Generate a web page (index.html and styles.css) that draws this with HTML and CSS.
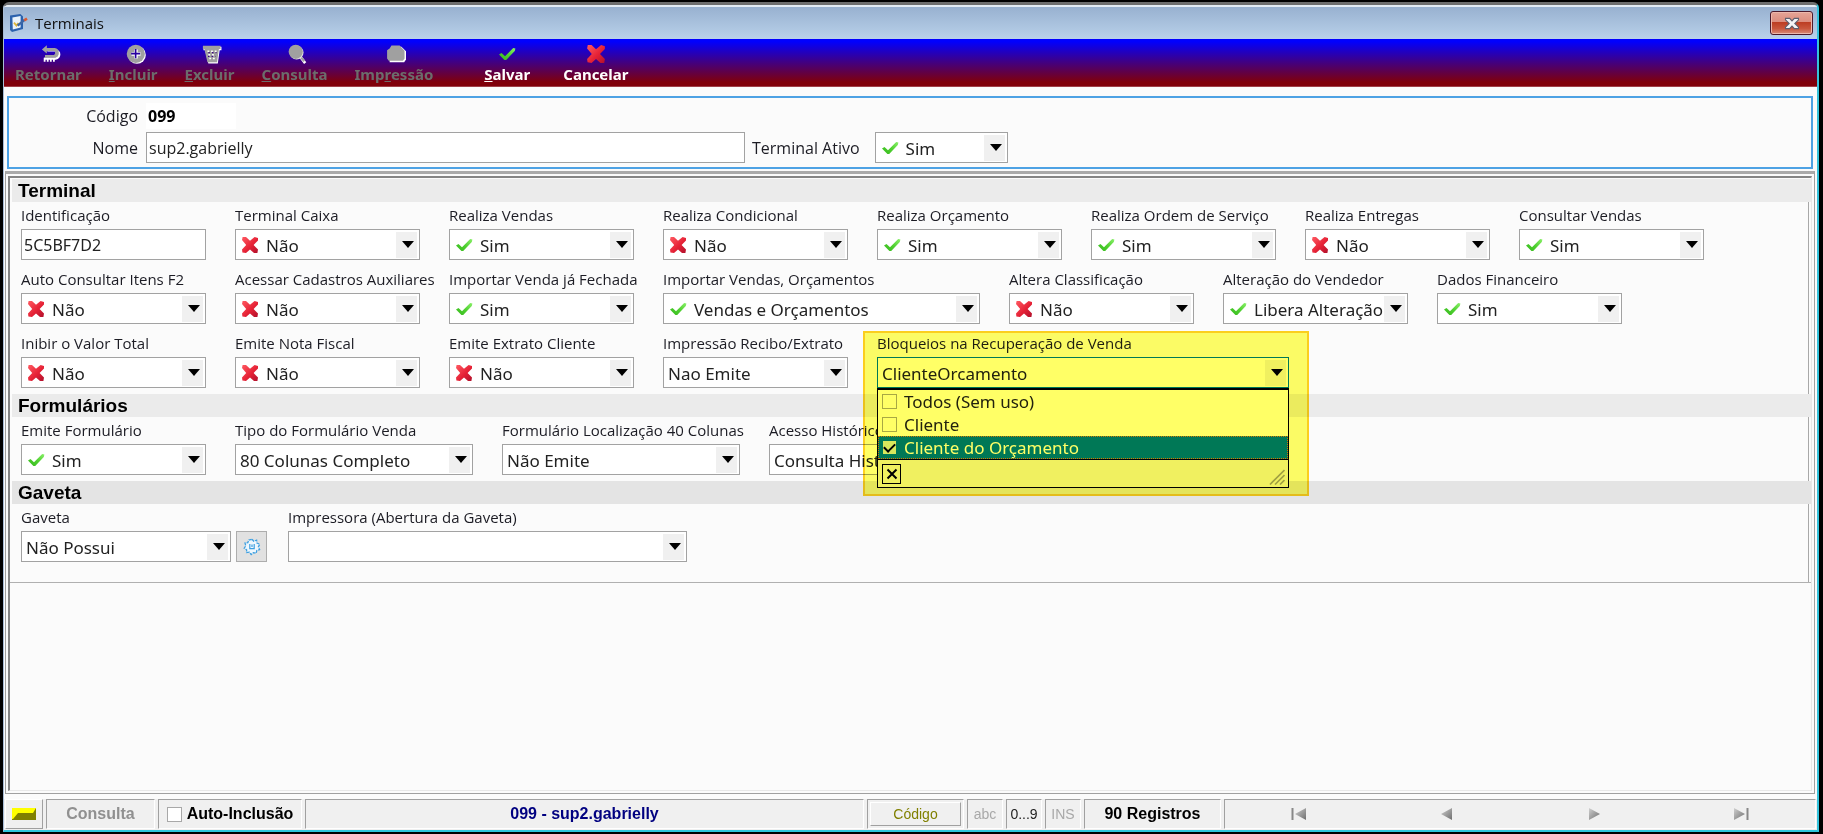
FILE: index.html
```html
<!DOCTYPE html>
<html lang="pt-BR">
<head>
<meta charset="utf-8">
<title>Terminais</title>
<link rel="stylesheet" href="styles.css">
</head>
<body>
<svg class="defs" aria-hidden="true">
  <defs>
    <linearGradient id="green" x1="1" y1="0" x2="0" y2="1"><stop offset="0" stop-color="#8af06a"/><stop offset="0.5" stop-color="#4fd030"/><stop offset="1" stop-color="#35b81c"/></linearGradient>
    <linearGradient id="red" x1="0" y1="0" x2="1" y2="1"><stop offset="0" stop-color="#ff5a62"/><stop offset="0.55" stop-color="#e62236"/><stop offset="1" stop-color="#b0102c"/></linearGradient>
    <linearGradient id="grey" x1="0" y1="0" x2="1" y2="1"><stop offset="0" stop-color="#d0d0d0"/><stop offset="1" stop-color="#6e6e6e"/></linearGradient>
    <symbol id="check" viewBox="0 0 18 14"><path d="M1 7.5 3.5 6 7 9.2 15.2 1 17.4 1.4 16.8 4 8.2 13 6.4 13Z" fill="url(#green)"/></symbol>
    <symbol id="cross" viewBox="0 0 18 18"><path d="M1 4 1.6 1 5 1 9 4.8 13.6 1 17 2 17 4.4 12.6 9 17 13.6 16.4 17 13 17 9 13.4 5 17 1.4 16.4 1 13.6 5.2 9Z" fill="url(#red)"/></symbol>
  </defs>
</svg>
<div class="window">
  <header class="titlebar">
    <svg class="app-icon" viewBox="0 0 20 20"><path d="M2 2.6 12.4 1 15 3.4V16L4 19 2 17Z" fill="#2b62ad"/><path d="M4.4 4.4 12.6 3V14.4L4.8 16.4Z" fill="#e9f3fc"/><path d="M6 9.6 8.4 12.6 10.4 10" fill="none" stroke="#dcb63c" stroke-width="1.8"/><path d="M9.6 12.6 16.6 6.8" stroke="#3c66a4" stroke-width="2.4"/><path d="M16.2 7.4 19 5.6" stroke="#dc5a32" stroke-width="2.6"/></svg>
    <h1 class="title">Terminais</h1>
    <button class="close" type="button" aria-label="Fechar"><svg viewBox="0 0 16 14"><path d="M1 1.5H5.5L8 4.2 10.5 1.5H15V3L11 7 15 11V12.5H10.5L8 9.8 5.5 12.5H1V11L5 7 1 3Z" fill="#f4f4f6" stroke="#5c6070" stroke-width="1.2"/></svg></button>
  </header>

  <nav class="toolbar">
    <button class="tool" type="button" disabled>
      <svg class="tool-icon" viewBox="0 0 22 22"><path d="M4 15V19.4M7.4 15V19.4M10.8 15V19.4M14.2 15V19.4" stroke="#fff" stroke-width="2"/><path d="M7 7H16Q20 8 20 11.5 20 15 16 16H4" fill="none" stroke="#fff" stroke-width="2.6"/><path d="M1 6 6.4 1.4V4.4H15Q19.6 5 19.6 10 19.6 14.6 15 15.2H4.4V12H14Q15.6 11.4 15.6 9.8 15.4 8 14 7.8H6.4V10.4Z" fill="#a0a0a0"/></svg>
      <span>Retornar</span></button>
    <button class="tool" type="button" disabled>
      <svg class="tool-icon" viewBox="0 0 22 22"><circle cx="12" cy="12" r="9.8" fill="#fff"/><circle cx="10.8" cy="10.8" r="10" fill="#a0a0a0"/><path d="M11 6V16M6 11H16" stroke="#fff" stroke-width="3.8"/><path d="M10.6 5.6V15.6M5.6 10.6H15.6" stroke="#2800a0" stroke-width="1.8"/></svg>
      <span><u>I</u>ncluir</span></button>
    <button class="tool" type="button" disabled>
      <svg class="tool-icon" viewBox="0 0 22 22"><path d="M1.6 3H21.4V7H19.4L17.4 21.4H7L3.4 7H1.6Z" fill="#fff"/><path d="M1 2H20.4V5.4H18.6L16.6 20H6L2.6 5.4H1Z" fill="#a0a0a0"/><path d="M6 8H16M7 12H15M8 16H15" stroke="#fff" stroke-width="1.8" stroke-dasharray="2 2"/><path d="M7 9.6H16M6.6 13.6H15" stroke="#380080" stroke-width="1.4" stroke-dasharray="1.6 2.4"/></svg>
      <span><u>E</u>xcluir</span></button>
    <button class="tool" type="button" disabled>
      <svg class="tool-icon" viewBox="0 0 22 22"><path d="M14 13 20 21" stroke="#fff" stroke-width="3"/><path d="M14 13 19 19" stroke="#a0a0a0" stroke-width="2.4"/><circle cx="10.6" cy="9.4" r="7.6" fill="#e4e4e4"/><circle cx="9.6" cy="8.6" r="7.8" fill="#a0a0a0"/></svg>
      <span><u>C</u>onsulta</span></button>
    <button class="tool" type="button" disabled>
      <svg class="tool-icon" viewBox="0 0 22 22"><path d="M7 3H17L22 8V17L20 20H4V17Z" fill="#fff"/><path d="M6 1.6H15L20.4 7.4V16L18.6 18.4H3L1.2 16V7L4 5Z" fill="#a0a0a0"/></svg>
      <span>Imp<u>r</u>essão</span></button>
    <button class="tool tool--save" type="button">
      <svg class="tool-icon"><use href="#check"/></svg>
      <span><u>S</u>alvar</span></button>
    <button class="tool" type="button">
      <svg class="tool-icon"><use href="#cross"/></svg>
      <span>Cancelar</span></button>
  </nav>

  <section class="record">
    <div class="record-row">
      <span class="record-label">Código</span>
      <output class="code">099</output>
    </div>
    <div class="record-row">
      <label class="record-label" for="nome">Nome</label>
      <input class="text record-name" id="nome" value="sup2.gabrielly">
      <label class="active-label" for="ativo">Terminal Ativo</label>
      <div class="combo combo--icon active-combo"><select id="ativo"><option>Sim</option></select><svg class="mark"><use href="#check"/></svg></div>
    </div>
  </section>

  <main class="panel">
    <div class="panel-inner">
    <form class="sheet">
      <h2 class="section">Terminal</h2>
      <div class="rows">
        <div class="row">
          <div class="field"><label for="f1">Identificação</label><input class="text" id="f1" value="5C5BF7D2"></div>
          <div class="field"><label for="f2">Terminal Caixa</label><div class="combo combo--icon"><select id="f2"><option>Não</option></select><svg class="mark"><use href="#cross"/></svg></div></div>
          <div class="field"><label for="f3">Realiza Vendas</label><div class="combo combo--icon"><select id="f3"><option>Sim</option></select><svg class="mark"><use href="#check"/></svg></div></div>
          <div class="field"><label for="f4">Realiza Condicional</label><div class="combo combo--icon"><select id="f4"><option>Não</option></select><svg class="mark"><use href="#cross"/></svg></div></div>
          <div class="field"><label for="f5">Realiza Orçamento</label><div class="combo combo--icon"><select id="f5"><option>Sim</option></select><svg class="mark"><use href="#check"/></svg></div></div>
          <div class="field"><label for="f6">Realiza Ordem de Serviço</label><div class="combo combo--icon"><select id="f6"><option>Sim</option></select><svg class="mark"><use href="#check"/></svg></div></div>
          <div class="field"><label for="f7">Realiza Entregas</label><div class="combo combo--icon"><select id="f7"><option>Não</option></select><svg class="mark"><use href="#cross"/></svg></div></div>
          <div class="field"><label for="f8">Consultar Vendas</label><div class="combo combo--icon"><select id="f8"><option>Sim</option></select><svg class="mark"><use href="#check"/></svg></div></div>
        </div>
        <div class="row">
          <div class="field"><label for="g1">Auto Consultar Itens F2</label><div class="combo combo--icon"><select id="g1"><option>Não</option></select><svg class="mark"><use href="#cross"/></svg></div></div>
          <div class="field"><label for="g2">Acessar Cadastros Auxiliares</label><div class="combo combo--icon"><select id="g2"><option>Não</option></select><svg class="mark"><use href="#cross"/></svg></div></div>
          <div class="field"><label for="g3">Importar Venda já Fechada</label><div class="combo combo--icon"><select id="g3"><option>Sim</option></select><svg class="mark"><use href="#check"/></svg></div></div>
          <div class="field field--wide"><label for="g4">Importar Vendas, Orçamentos</label><div class="combo combo--icon"><select id="g4"><option>Vendas e Orçamentos</option></select><svg class="mark"><use href="#check"/></svg></div></div>
          <div class="field"><label for="g5">Altera Classificação</label><div class="combo combo--icon"><select id="g5"><option>Não</option></select><svg class="mark"><use href="#cross"/></svg></div></div>
          <div class="field"><label for="g6">Alteração do Vendedor</label><div class="combo combo--icon"><select id="g6"><option>Libera Alteração</option></select><svg class="mark"><use href="#check"/></svg></div></div>
          <div class="field"><label for="g7">Dados Financeiro</label><div class="combo combo--icon"><select id="g7"><option>Sim</option></select><svg class="mark"><use href="#check"/></svg></div></div>
        </div>
        <div class="row">
          <div class="field"><label for="h1">Inibir o Valor Total</label><div class="combo combo--icon"><select id="h1"><option>Não</option></select><svg class="mark"><use href="#cross"/></svg></div></div>
          <div class="field"><label for="h2">Emite Nota Fiscal</label><div class="combo combo--icon"><select id="h2"><option>Não</option></select><svg class="mark"><use href="#cross"/></svg></div></div>
          <div class="field"><label for="h3">Emite Extrato Cliente</label><div class="combo combo--icon"><select id="h3"><option>Não</option></select><svg class="mark"><use href="#cross"/></svg></div></div>
          <div class="field"><label for="h4">Impressão Recibo/Extrato</label><div class="combo"><select id="h4"><option>Nao Emite</option></select></div></div>
          <div class="field field--lock">
            <label for="h5">Bloqueios na Recuperação de Venda</label>
            <div class="combo combo--open"><select id="h5"><option>ClienteOrcamento</option></select></div>
            <div class="popup">
              <label class="item"><input type="checkbox">Todos (Sem uso)</label>
              <label class="item"><input type="checkbox">Cliente</label>
              <label class="item item--on"><input type="checkbox" checked>Cliente do Orçamento</label>
              <div class="popup-foot">
                <button class="popup-close" type="button" aria-label="Fechar lista"><svg viewBox="0 0 12 12"><path d="M1.5 1.5 10.5 10.5M10.5 1.5 1.5 10.5" stroke="#000" stroke-width="2"/></svg></button>
                <svg class="grip" viewBox="0 0 16 16"><path d="M1 15.5 15.5 1M6 15.5 15.5 6M11 15.5 15.5 11" stroke="#a0a0a0" stroke-width="1.6"/></svg>
              </div>
            </div>
            <div class="marker"></div>
          </div>
        </div>
      </div>

      <h2 class="section">Formulários</h2>
      <div class="rows">
        <div class="row">
          <div class="field"><label for="i1">Emite Formulário</label><div class="combo combo--icon"><select id="i1"><option>Sim</option></select><svg class="mark"><use href="#check"/></svg></div></div>
          <div class="field field--form"><label for="i2">Tipo do Formulário Venda</label><div class="combo"><select id="i2"><option>80 Colunas Completo</option></select></div></div>
          <div class="field field--form"><label for="i3">Formulário Localização 40 Colunas</label><div class="combo"><select id="i3"><option>Não Emite</option></select></div></div>
          <div class="field field--form"><label for="i4">Acesso Histórico</label><div class="combo"><select id="i4"><option>Consulta Histórico</option></select></div></div>
        </div>
      </div>

      <h2 class="section section--dark">Gaveta</h2>
      <div class="rows rows--last">
        <div class="row row--drawer">
          <div class="field field--drawer"><label for="j1">Gaveta</label><div class="combo"><select id="j1"><option>Não Possui</option></select></div></div>
          <button class="gear" type="button" aria-label="Configurar gaveta"><svg viewBox="0 0 18 18"><path d="M9 1.2 10.8 3.2 13.6 2.2 14 5 16.8 6.2 15.4 8.8 16.6 11.6 13.8 12.4 13.2 15.2 10.4 14.6 8.2 16.6 6.4 14.2 3.6 14.6 3.6 11.8 1.2 10.2 2.8 7.8 2 5 4.8 4.6 5.8 2Z" fill="#eef7fd" stroke="#3d9fe0" stroke-width="1.3" stroke-dasharray="3 1"/><path d="M6.8 6V10.6H11.2V6M9 6.6V9" fill="none" stroke="#3d9fe0" stroke-width="1.2"/></svg></button>
          <div class="field field--printer"><label for="j2">Impressora (Abertura da Gaveta)</label><div class="combo"><select id="j2"><option></option></select></div></div>
        </div>
      </div>
    </form>
    </div>
  </main>

  <footer class="status">
    <button class="led" type="button" aria-label="Estado"><svg viewBox="0 0 24 12"><path d="M0 0H24V12H0Z" fill="#808000"/><path d="M0 0H24L21 5H6L1 11H0Z" fill="#ffff00"/></svg></button>
    <div class="cell cell--mode">Consulta</div>
    <div class="cell cell--auto"><input type="checkbox" id="auto"><label for="auto">Auto-Inclusão</label></div>
    <div class="cell cell--record">099 - sup2.gabrielly</div>
    <div class="cell cell--code"><button class="code-btn" type="button">Código</button></div>
    <div class="cell cell--key cell--dim">abc</div>
    <div class="cell cell--key">0...9</div>
    <div class="cell cell--key cell--dim">INS</div>
    <div class="cell cell--count">90 Registros</div>
    <div class="cell cell--nav">
      <button type="button" aria-label="Primeiro"><svg viewBox="0 0 18 14"><path d="M2.5 1V13" stroke="#888" stroke-width="2"/><path d="M16 1V13L5 7Z" fill="url(#grey)"/></svg></button>
      <button type="button" aria-label="Anterior"><svg viewBox="0 0 18 14"><path d="M15 1V13L4 7Z" fill="url(#grey)"/></svg></button>
      <button type="button" aria-label="Próximo"><svg viewBox="0 0 18 14"><path d="M4 1V13L15 7Z" fill="url(#grey)"/></svg></button>
      <button type="button" aria-label="Último"><svg viewBox="0 0 18 14"><path d="M2 1V13L13 7Z" fill="url(#grey)"/><path d="M15.5 1V13" stroke="#888" stroke-width="2"/></svg></button>
    </div>
  </footer>
</div>
</body>
</html>
```

FILE: styles.css
```css
* { box-sizing: border-box; }

body {
  margin: 0;
  padding: 2px 4px 2px 3px;
  height: 100vh;
  background: #000;
  color: #1c1c24;
  font: 15px/22px "Open Sans", sans-serif;
}

button { font: inherit; padding: 0; }

.defs { position: absolute; width: 0; height: 0; }

.window {
  display: flex;
  flex-direction: column;
  height: 100%;
  background: #fbfbfb;
  border: 1px solid #a9bdd6;
  border-top: 3px solid #6e6e6e;
  border-right: 2px solid #35c3dc;
  border-bottom: 2px solid #2fc4da;
  border-radius: 6px 6px 0 0;
  overflow: hidden;
}

/* Title bar */
.titlebar {
  display: flex;
  align-items: center;
  height: 34px;
  flex: none;
  padding: 0 4px;
  border-top: 2px solid #e3ebf4;
  background: linear-gradient(#98b1d0, #b9d1ea);
}
.app-icon { width: 20px; height: 20px; margin-right: 7px; }
.title { flex: 1; margin: 0; font-size: 15px; font-weight: 400; color: #111; }
.close {
  display: grid;
  place-items: center;
  width: 43px;
  height: 24px;
  border: 1px solid #4c1a2c;
  border-radius: 3px;
  background: linear-gradient(#e6a497 0%, #dc8d7e 45%, #bc3c22 46%, #c9563c 75%, #d98c78 100%);
  box-shadow: inset 0 0 0 1px #ecb8ac;
}
.close svg { width: 16px; height: 13px; }

/* Toolbar */
.toolbar {
  display: flex;
  gap: 27px;
  height: 48px;
  flex: none;
  padding: 5px 11px 0;
  background: linear-gradient(#0000ff 5%, #80000a 92%);
  border-bottom: 1px solid #a04048;
}
.tool {
  display: flex;
  flex-direction: column;
  align-items: center;
  border: 0;
  background: none;
  color: #fff;
  font: bold 15px/20px "Noto Sans", sans-serif;
}
.tool:disabled { color: #6c6c6c; }
.tool:disabled .tool-icon { margin-left: 5px; }
.tool--save { margin: 0 6px 0 24px; }
.tool-icon { width: 20px; height: 20px; }
.tool--save .tool-icon { width: 18px; }

/* Record header */
.record {
  display: flex;
  flex-direction: column;
  gap: 2px;
  flex: none;
  margin: 9px 4px 0 3px;
  padding: 4px 0;
  border: 2px solid #4da2e4;
  font-size: 16px;
}
.record-row { display: flex; align-items: center; min-height: 28px; }
.record-label { width: 129px; margin-right: 8px; text-align: right; }
.code {
  width: 90px;
  padding-left: 2px;
  background: #fff;
  color: #000;
  font: bold 16px/26px "Noto Sans", sans-serif;
}
.record-name { width: 599px; }
.active-label { margin: 0 15px 0 7px; }
.active-combo { width: 133px; }

/* Fields */
.text, .combo {
  height: 31px;
  border: 1px solid #a2a2a2;
  background: #fff;
}
.text {
  padding: 0 2px;
  color: #222;
  font: 16px "Noto Sans", sans-serif;
}
.text.record-name { font-family: "Open Sans", sans-serif; }
.combo { display: grid; }
.combo > * { grid-area: 1 / 1; }
.combo select {
  width: 100%;
  padding: 2px 23px 0 4px;
  border: 0;
  appearance: none;
  background: none;
  color: #222;
  font: 17px "Noto Sans", sans-serif;
}
.combo--icon select { padding-left: 30px; }
.combo::before, .combo::after {
  content: "";
  grid-area: 1 / 1;
  justify-self: end;
  align-self: center;
  pointer-events: none;
}
.combo::before { width: 21px; height: 26px; margin-right: 2px; background: #f0f0f0; }
.combo::after {
  margin-right: 5px;
  border: 6px solid transparent;
  border-top: 7px solid #000;
  border-bottom: 0;
}
.mark {
  width: 18px;
  height: 18px;
  margin-left: 5px;
  align-self: center;
  pointer-events: none;
}

/* Form sheet */
.panel {
  display: flex;
  flex: 1;
  min-height: 0;
  margin: 2px 2px 5px 1px;
  padding: 2px 2px 2px 2px;
  border: 1px solid #a0a0a0;
  border-top: 3px solid #aaa;
}
.panel-inner {
  flex: 1;
  min-width: 0;
  border: 1px solid #e8e8e8;
  border-top: 2px solid #858585;
  border-left: 2px solid #858585;
}
.sheet { padding-top: 1px; border-bottom: 1px solid #b0b0b0; }
.section {
  margin: 0 0 0 2px;
  padding-left: 6px;
  background: #ebebeb;
  color: #000;
  font: bold 19px/23px "Liberation Sans", sans-serif;
}
.section--dark { background: #e4e4e4; }
.rows {
  display: flex;
  flex-direction: column;
  gap: 8px;
  margin-right: 2px;
  padding: 2px 10px 6px 11px;
  border-right: 1px solid #a8a8a8;
}
.rows--last { padding-bottom: 20px; }
.row { display: flex; gap: 29px; }
.field { position: relative; display: flex; flex-direction: column; gap: 3px; width: 185px; flex: none; }
.field > label { white-space: nowrap; }
.field--wide { width: 317px; }
.field--form { width: 238px; }
.field--lock { width: 412px; }
.field--drawer { width: 210px; }
.field--printer { width: 399px; margin-left: 16px; }
.row--drawer { gap: 5px; align-items: flex-end; }
.gear {
  display: grid;
  place-items: center;
  width: 31px;
  height: 31px;
  border: 1px solid #adadad;
  background: #e1e1e1;
}
.gear svg { width: 18px; height: 18px; }

/* Open check list */
.combo--open { border-color: #0078d7; }
.popup {
  position: absolute;
  z-index: 1;
  top: 100%;
  left: 0;
  right: 0;
  border: 1px solid #000;
  border-top-width: 2px;
  background: #fff;
}
.item {
  display: flex;
  align-items: center;
  gap: 7px;
  height: 23px;
  padding-left: 4px;
  color: #222;
  font: 17px/22px "Noto Sans", sans-serif;
}
.item input, .cell--auto input {
  appearance: none;
  width: 15px;
  height: 15px;
  margin: 0;
  border: 1px solid #a8a8a8;
  background: #fff;
}
.item--on { background: #0078d7; color: #fff; outline: 1px dotted #d07800; outline-offset: -1px; }
.item--on input { display: grid; place-items: center; background: #d8e8e8; border: 0; width: 13px; height: 13px; margin: 0 1px; }
.item--on input::before {
  content: "";
  width: 9px;
  height: 5px;
  margin-top: -3px;
  border: solid #000;
  border-width: 0 0 2px 2px;
  rotate: -45deg;
}
.popup-foot {
  display: flex;
  justify-content: space-between;
  align-items: center;
  height: 28px;
  padding: 0 3px 0 4px;
  border-top: 1px solid #000;
  background: #f0f0f0;
}
.popup-close {
  display: grid;
  place-items: center;
  width: 19px;
  height: 20px;
  border: 1px solid #000;
  background: none;
}
.popup-close svg { width: 12px; height: 12px; }
.grip { width: 16px; height: 16px; align-self: flex-end; margin-bottom: 2px; }
.marker {
  position: absolute;
  z-index: 2;
  top: -1px;
  left: -14px;
  right: -20px;
  height: 165px;
  border: 2px solid #ffd21e;
  background: #ffff66;
  mix-blend-mode: multiply;
  pointer-events: none;
}

/* Status bar */
.status {
  display: flex;
  gap: 3px;
  height: 31px;
  flex: none;
  padding: 0 1px 1px;
  background: #f0f0f0;
  font: bold 16px/20px "Liberation Sans", sans-serif;
}
.cell {
  display: flex;
  align-items: center;
  justify-content: center;
  border: 1px solid #fff;
  border-top-color: #a0a0a0;
  border-left-color: #a0a0a0;
}
.led {
  display: grid;
  place-items: center;
  width: 38px;
  border: 1px solid #fff;
  border-right-color: #a0a0a0;
  border-bottom-color: #a0a0a0;
  background: #f0f0f0;
}
.led svg { width: 24px; height: 12px; }
.cell--mode { width: 109px; color: #909090; }
.cell--auto { width: 144px; gap: 5px; color: #000; }
.cell--record { flex: 1; color: #000080; }
.cell--code { width: 97px; padding: 2px; font-weight: 400; font-size: 14px; }
.code-btn {
  flex: 1;
  align-self: stretch;
  border: 1px solid #fff;
  border-right-color: #a0a0a0;
  border-bottom-color: #a0a0a0;
  background: #f0f0f0;
  color: #808000;
}
.cell--key { width: 36px; color: #222; font-weight: 400; font-size: 14px; }
.cell--dim { color: #a8a8a8; }
.cell--count { width: 137px; color: #000; }
.cell--nav { width: 592px; }
.cell--nav button { flex: 1; display: grid; place-items: center; border: 0; background: none; }
.cell--nav svg { width: 18px; height: 14px; }
```
